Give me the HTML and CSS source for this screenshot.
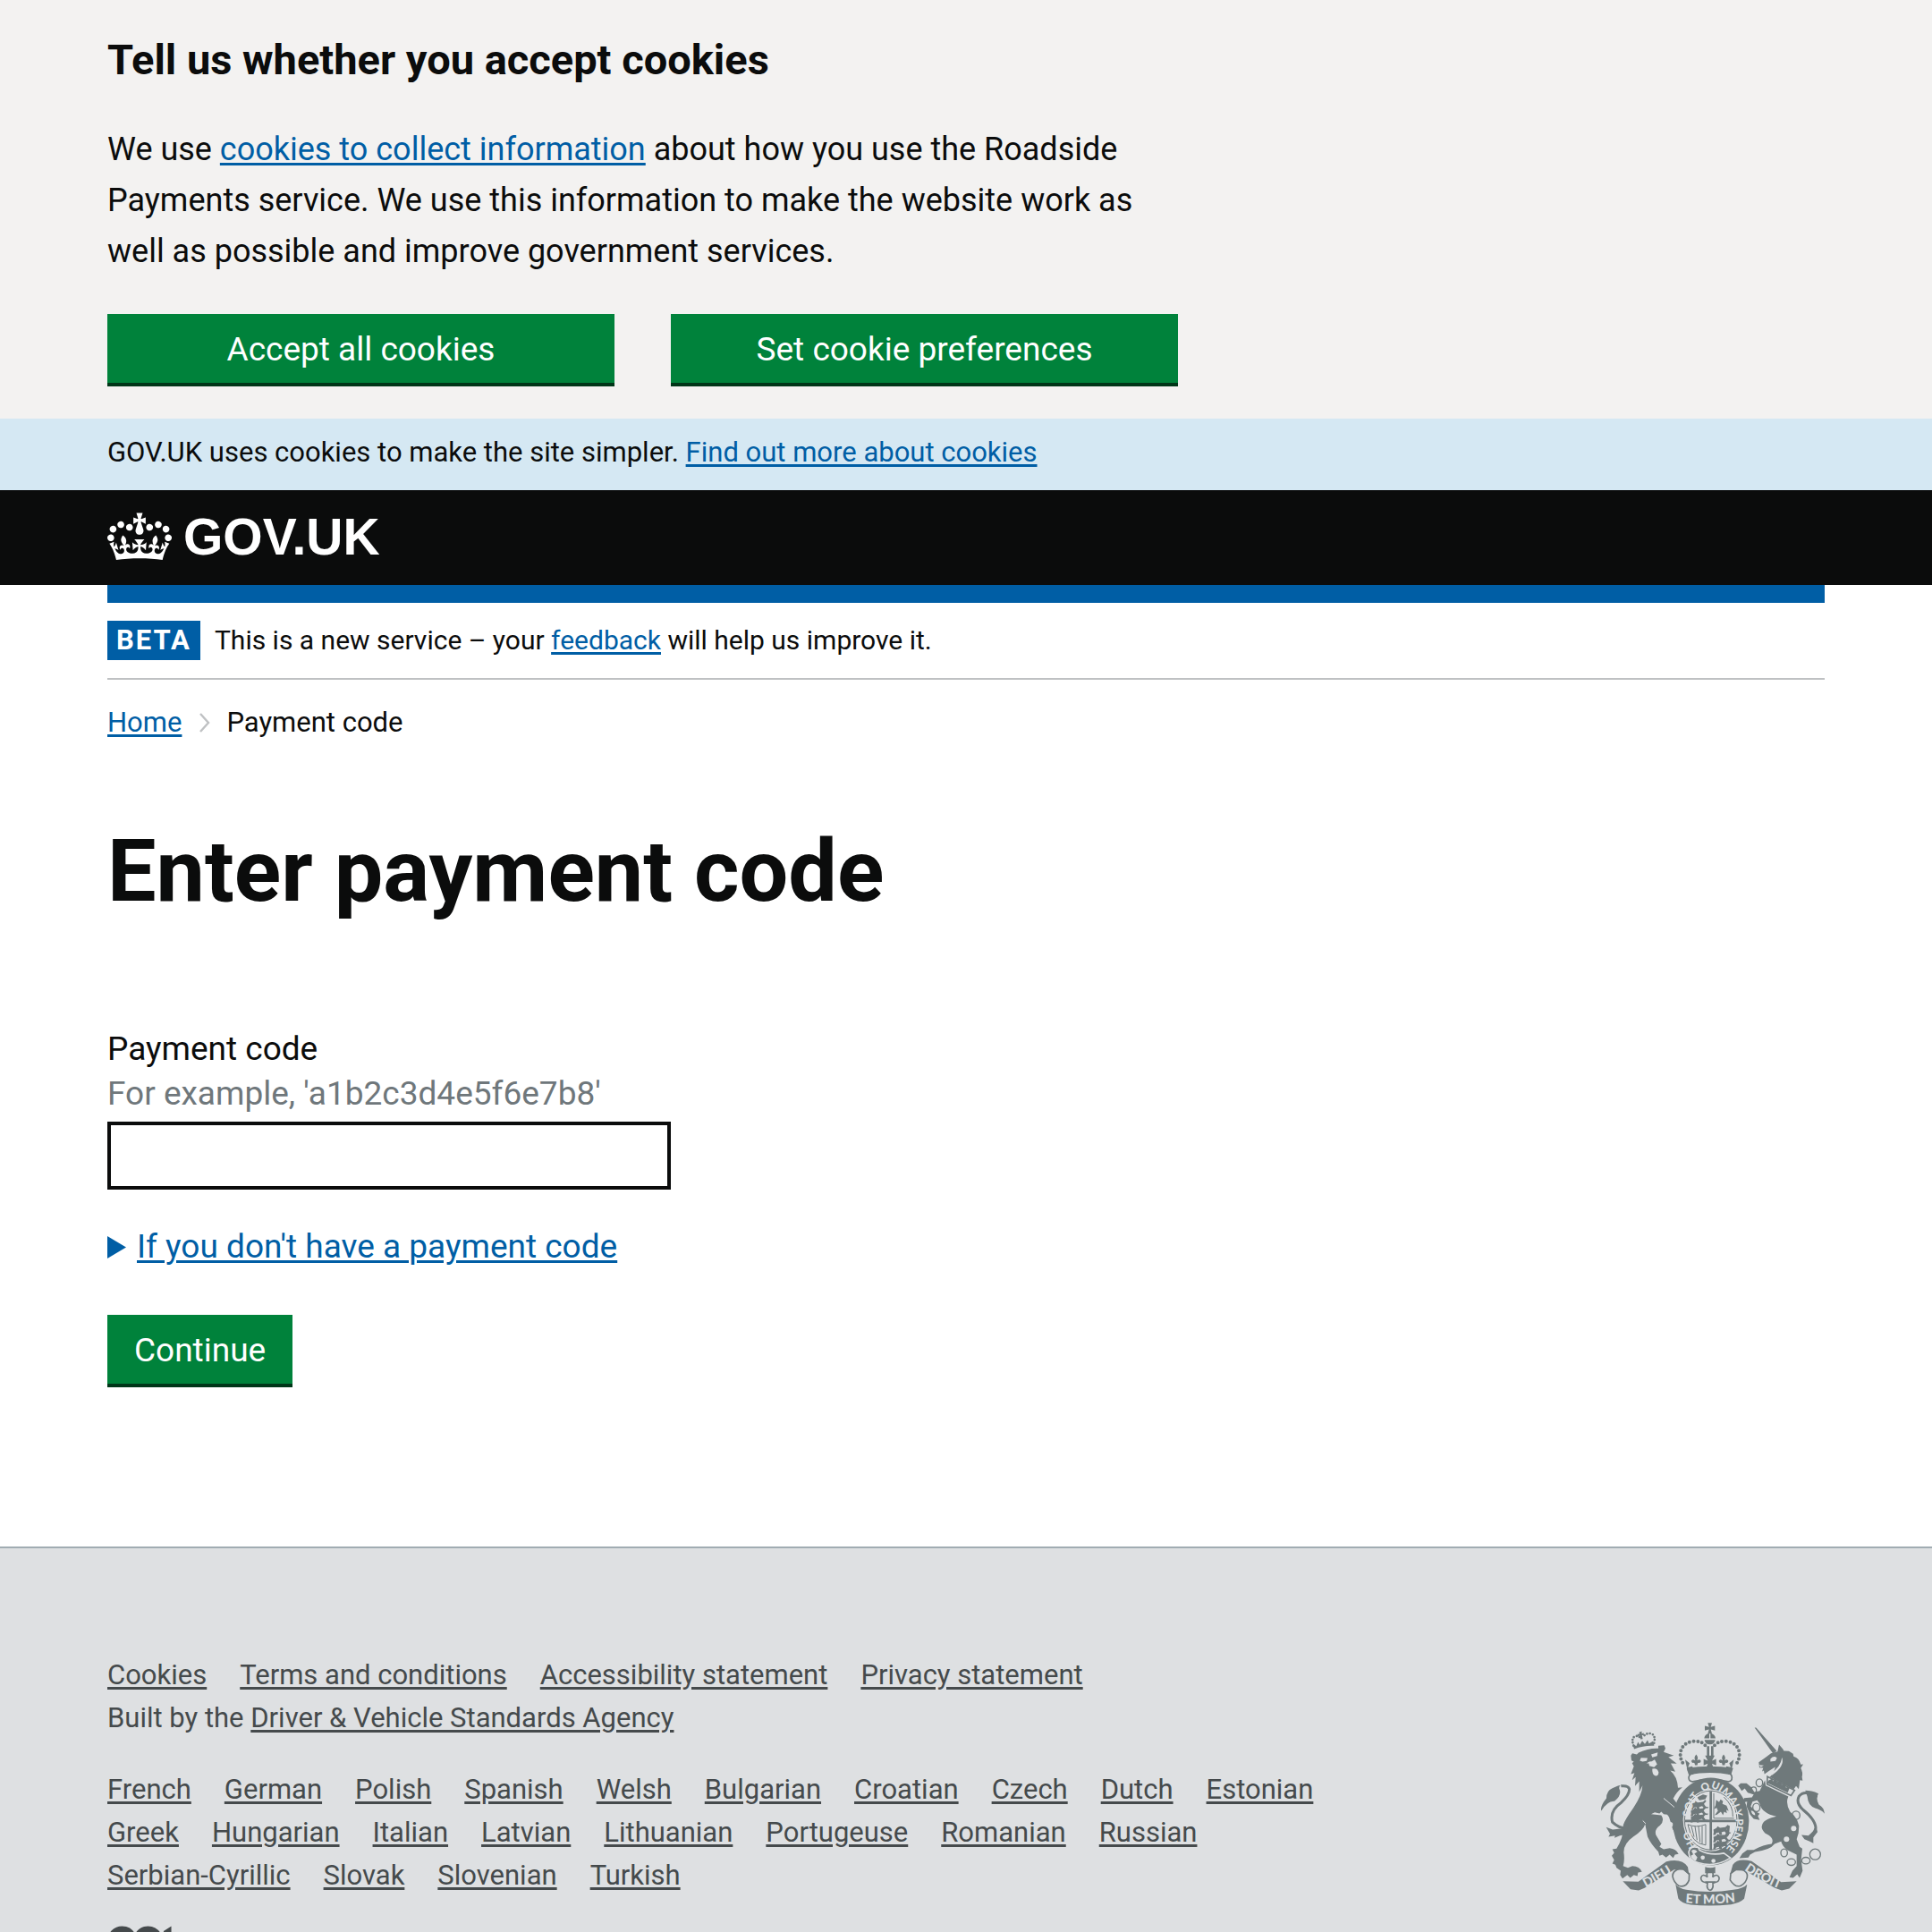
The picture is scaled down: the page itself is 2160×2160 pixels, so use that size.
FILE: index.html
```html
<!DOCTYPE html>
<html lang="en">
<head>
  <meta charset="utf-8">
  <meta name="viewport" content="width=device-width, initial-scale=1">
  <title>Enter payment code - GOV.UK</title>
  <link rel="stylesheet" href="styles.css">
</head>
<body>
  <section class="cookie-banner" aria-label="Cookie choices">
    <div class="container">
      <div class="cookie-banner-content">
        <h2 class="cookie-banner-title">Tell us whether you accept cookies</h2>
        <p class="cookie-banner-text">We use <a class="link" href="#">cookies to collect information</a> about how you use the Roadside Payments service. We use this information to make the website work as well as possible and improve government services.</p>
        <div class="cookie-banner-actions">
          <button class="button" type="button">Accept all cookies</button>
          <button class="button" type="button">Set cookie preferences</button>
        </div>
      </div>
    </div>
  </section>

  <div class="cookie-message">
    <p class="container">GOV.UK uses cookies to make the site simpler. <a class="link" href="#">Find out more about cookies</a></p>
  </div>

  <header class="header">
    <div class="container">
      <a class="logo" href="#">
        <svg class="logo-crown" aria-hidden="true" viewBox="0 0 132 97"><path fill="currentColor" fill-rule="evenodd" d="M25 30.2c3.5 1.5 7.7-.2 9.1-3.7 1.5-3.6-.2-7.8-3.9-9.2-3.6-1.4-7.6.3-9.1 3.9-1.4 3.5.3 7.5 3.9 9zM9 39.5c3.6 1.5 7.8-.2 9.2-3.7 1.5-3.6-.2-7.8-3.9-9.1-3.6-1.5-7.6.2-9.1 3.8-1.4 3.5.3 7.5 3.8 9zM4.4 57.2c3.5 1.5 7.7-.2 9.1-3.8 1.5-3.6-.2-7.7-3.9-9.1-3.5-1.5-7.6.3-9.1 3.8-1.4 3.5.3 7.6 3.9 9.1zm38.3-21.4c3.5 1.5 7.7-.2 9.1-3.8 1.5-3.6-.2-7.7-3.9-9.1-3.6-1.5-7.6.3-9.1 3.8-1.3 3.6.4 7.7 3.9 9.1zm64.4-5.6c-3.6 1.5-7.8-.2-9.1-3.7-1.5-3.6.2-7.8 3.8-9.2 3.6-1.4 7.7.3 9.2 3.9 1.3 3.5-.4 7.5-3.9 9zm15.9 9.3c-3.6 1.5-7.7-.2-9.1-3.7-1.5-3.6.2-7.8 3.7-9.1 3.6-1.5 7.7.2 9.2 3.8 1.5 3.5-.3 7.5-3.8 9zm4.7 17.7c-3.6 1.5-7.8-.2-9.2-3.8-1.5-3.6.2-7.7 3.9-9.1 3.6-1.5 7.7.3 9.2 3.8 1.3 3.5-.4 7.6-3.9 9.1zM89.3 35.8c-3.6 1.5-7.8-.2-9.2-3.8-1.4-3.6.2-7.7 3.9-9.1 3.6-1.5 7.7.3 9.2 3.8 1.4 3.6-.3 7.7-3.9 9.1zM69.7 17.7l8.9 4.7V9.3l-8.9 2.8c-.2-.3-.5-.6-.9-.9L72.4 0H59.6l3.5 11.2c-.3.3-.6.5-.9.9l-8.8-2.8v13.1l8.8-4.7c.3.3.6.7.9.9l-5 15.4v.1c-.2.8-.4 1.6-.4 2.4 0 4.1 3.1 7.5 7 8.1h.2c.3 0 .7.1 1 .1.4 0 .7 0 1-.1h.2c4-.6 7.1-4.1 7.1-8.1 0-.8-.1-1.7-.4-2.4V34l-5.1-15.4c.4-.2.7-.6 1-.9zM66 92.8c16.9 0 32.8 1.1 47.1 3.2 4-16.9 8.9-26.7 14-33.5l-9.6-3.4c1 4.9 1.1 7.2 0 10.2-1.5-1.4-3-4.3-4.2-8.7L108.6 76c2.8-2 5-3.2 7.5-3.3-4.4 9.4-10 11.9-13.6 11.2-4.3-.8-6.3-4.6-5.6-7.9 1-4.7 5.7-5.9 8-.5 4.3-8.7-3-11.4-7.6-8.8 7.1-7.2 7.9-13.5 2.1-21.1-8 6.1-8.1 12.3-4.5 20.8-4.7-5.4-12.1-2.5-9.5 6.2 3.4-5.2 7.9-2 7.2 3.1-.6 4.3-6.4 7.8-13.5 7.2-10.3-.9-10.9-8-11.2-13.8 2.5-.5 7.1 1.8 11 7.3L80.2 60c-4.1 4.4-8 5.3-12.3 5.4 1.4-4.4 8-11.6 8-11.6H55.5s6.4 7.2 7.9 11.6c-4.2-.1-8-1-12.3-5.4l1.4 16.4c3.9-5.5 8.5-7.7 10.9-7.3-.3 5.8-.9 12.8-11.1 13.8-7.2.6-12.9-2.9-13.5-7.2-.7-5 3.8-8.3 7.1-3.1 2.7-8.7-4.6-11.6-9.4-6.2 3.7-8.5 3.6-14.7-4.6-20.8-5.8 7.6-5 13.9 2.2 21.1-4.7-2.6-11.9.1-7.7 8.8 2.3-5.5 7.1-4.2 8.1.5.7 3.3-1.3 7.1-5.7 7.9-3.5.7-9-1.8-13.5-11.2 2.5.1 4.7 1.3 7.5 3.3l-4.7-15.4c-1.2 4.4-2.7 7.2-4.3 8.7-1.1-3-.9-5.3 0-10.2l-9.5 3.4c5 6.9 9.9 16.7 14 33.5 14.8-2.1 30.8-3.2 47.7-3.2z"/></svg>
        <span>GOV.UK</span>
      </a>
    </div>
  </header>

  <div class="container">
    <div class="header-bar"></div>
    <div class="phase-banner">
      <strong class="phase-tag">BETA</strong>
      <span>This is a new service – your <a class="link" href="#">feedback</a> will help us improve it.</span>
    </div>
    <nav aria-label="Breadcrumb">
      <ol class="breadcrumbs">
        <li><a class="link" href="#">Home</a></li>
        <li class="breadcrumb-current"><svg class="chevron" aria-hidden="true" viewBox="0 0 12 22"><path d="M1 1l9 10-9 10" fill="none" stroke="#bfc1c3" stroke-width="2.4"/></svg>Payment code</li>
      </ol>
    </nav>

    <main class="main">
      <h1 class="page-title">Enter payment code</h1>
      <form class="form">
        <label class="label" for="payment-code">Payment code</label>
        <span class="hint" id="payment-code-hint">For example, 'a1b2c3d4e5f6e7b8'</span>
        <input class="input" id="payment-code" name="payment-code" type="text" aria-describedby="payment-code-hint">
        <details class="details">
          <summary class="summary"><svg class="summary-arrow" aria-hidden="true" viewBox="0 0 21 25"><path d="M0 0l21 12.500L0 25z" fill="currentColor"/></svg><span class="link">If you don't have a payment code</span></summary>
        </details>
        <button class="button" type="submit">Continue</button>
      </form>
    </main>
  </div>

  <footer class="footer">
    <div class="container footer-row">
      <div class="footer-meta">
        <ul class="footer-list">
          <li><a href="#">Cookies</a></li>
          <li><a href="#">Terms and conditions</a></li>
          <li><a href="#">Accessibility statement</a></li>
          <li><a href="#">Privacy statement</a></li>
        </ul>
        <p class="built-by">Built by the <a href="#">Driver &amp; Vehicle Standards Agency</a></p>
        <ul class="footer-list footer-languages">
          <li><a href="#">French</a></li>
          <li><a href="#">German</a></li>
          <li><a href="#">Polish</a></li>
          <li><a href="#">Spanish</a></li>
          <li><a href="#">Welsh</a></li>
          <li><a href="#">Bulgarian</a></li>
          <li><a href="#">Croatian</a></li>
          <li><a href="#">Czech</a></li>
          <li><a href="#">Dutch</a></li>
          <li><a href="#">Estonian</a></li>
          <li><a href="#">Greek</a></li>
          <li><a href="#">Hungarian</a></li>
          <li><a href="#">Italian</a></li>
          <li><a href="#">Latvian</a></li>
          <li><a href="#">Lithuanian</a></li>
          <li><a href="#">Portugeuse</a></li>
          <li><a href="#">Romanian</a></li>
          <li><a href="#">Russian</a></li>
          <li><a href="#">Serbian-Cyrillic</a></li>
          <li><a href="#">Slovak</a></li>
          <li><a href="#">Slovenian</a></li>
          <li><a href="#">Turkish</a></li>
        </ul>
        <svg class="licence-logo" aria-hidden="true" viewBox="0 0 483.200 195.700"><path fill="currentColor" d="M421.500 142.800V.1l-50.700 32.300v161.100h112.400v-50.700zm-122.300-9.600A47.120 47.120 0 0 1 221 97.800c0-26 21.100-47.100 47.100-47.100 16.700 0 31.400 8.700 39.700 21.800l42.700-27.200A97.630 97.630 0 0 0 268.100 0c-36.500 0-68.300 20.100-85.100 49.700A98 98 0 0 0 97.800 0C43.900 0 0 43.900 0 97.800s43.900 97.800 97.800 97.800c36.500 0 68.300-20.100 85.100-49.700a97.760 97.760 0 0 0 149.600 25.400l19.400 22.200h3v-87.800h-80l24.300 27.500zM97.800 145c-26 0-47.100-21.100-47.100-47.100s21.100-47.100 47.100-47.100 47.100 21.100 47.100 47.100S123.800 145 97.800 145"/></svg>
      </div>
      <a class="arms-link" href="#" aria-label="Crown copyright">
        <svg class="arms" viewBox="60 80 750 614" aria-hidden="true">
          <defs>
            <path id="garter" d="M428 533A105 124 0 0 1 428 298A105 120 0 0 1 428 533"/>
            <path id="dieu" d="M202 637Q255 610 306 576"/>
            <path id="mon" d="M338 683Q426 692 516 680"/>
            <path id="droit" d="M537 571Q590 610 662 638"/>
            <g id="lion-passant"><path d="M0 8l10-5 4-6 8 5 18-2 7-7 4 5-8 9 6 9 10 2-4 4-12-2-6-6-10 3 2 8-8 2-3-9-8 1-4 7-7 0 2-9z"/></g>
            <g id="fleur"><path d="M0-24q9 10 3 20 10-7 13 2 0 8-8 6-4 0-4 8h-8q0-8-4-8-8 2-8-6 3-9 13-2-6-10 3-20z"/></g>
            <g id="cross"><path d="M-7-18H7L3-4 17-8V8L3 4 7 18H-7l4-14-14 4V-8l14 4z"/></g>
          </defs>

          <!-- Central crown -->
          <use href="#cross" x="425" y="98"/>
          <path d="M406 132q2-14 17-17v17zM427 115q15 3 17 17h-17zM407 137h36q-2 15-18 15t-18-15z"/>
          <path d="M415 158h8v32h-8zM429 158h8v32h-8zM409 190h32l-9 17 14-6v22l-14-6 6 17h-26l6-17-14 6v-22l14 6z"/>
          <g class="arms-beads">
            <path d="M409 155Q395 139 368 142Q330 149 326 182Q325 206 340 222"/>
            <path d="M441 155Q455 139 482 142Q520 149 524 182Q525 206 510 222"/>
          </g>
          <use href="#fleur" x="379" y="210"/><use href="#fleur" x="471" y="210"/>
          <path d="M342 203l15 12-5 14 14-3 4 8q52-12 106 0l5-8 14 3-5-14 15-12q-4 22-9 40-68-20-145 0-5-20-9-40z"/>
          <path d="M347 232q78-13 156 0l-7 22q-70-13-142 0z"/>
          <path class="arms-line" d="M370 250q-15 1-16 14 1 14 14 13 58-14 118 0 13 0 13-13 0-13-12-14"/>

          <!-- Garter and quartered shield -->
          <ellipse cx="428" cy="411" rx="128" ry="147"/>
          <ellipse class="arms-light" cx="428" cy="407" rx="93" ry="104"/>
          <ellipse class="arms-thin" cx="428" cy="407" rx="88" ry="99"/>
          <path d="M424 310h8v197h-8zM341 405h174v8H341z"/>
          <path class="arms-thin" d="M438 316v84h68M502 395q2-37-30-66"/>
          <g><use href="#lion-passant" x="362" y="345"/><use href="#lion-passant" x="361" y="367"/><use href="#lion-passant" x="361" y="388"/>
          <use href="#lion-passant" x="437" y="430"/><use href="#lion-passant" x="437" y="455"/><use href="#lion-passant" x="437" y="478"/></g>
          <path d="M382 330l20-10 14 4-6 12-20 4zM484 422l8 4-3 30-7 8-5-7z"/>
          <path d="M446 338l10 8 5-9 8 6-2 9 14 6 7 18-8-5 2 12-9-5-4 12-7-12-13 10-8 2 11-15-4-10-10 4 6-13z"/>
          <path class="arms-thin" d="M351 421q28 12 60 0v69q-48-4-60-69zM363 427l9 35M375 427l7 46M387 427l5 53M399 426v60"/>
          <g class="arms-motto">
            <text><textPath href="#garter" startOffset="15%">HO</textPath></text>
            <text><textPath href="#garter" startOffset="34%">SOIT</textPath></text>
            <text><textPath href="#garter" startOffset="49%">QUI</textPath></text>
            <text><textPath href="#garter" startOffset="61%">MAL</textPath></text>
            <text><textPath href="#garter" startOffset="69%">Y</textPath></text>
            <text><textPath href="#garter" startOffset="81%">PENSE</textPath></text>
          </g>
          <path class="arms-outline" d="M354 514q5-24 32-16l4 9q38 20 82 10l22 16q-52 34-108 16-30-4-32-35z"/>
          <circle class="arms-light" cx="401" cy="532" r="7"/><circle class="arms-light" cx="437" cy="543" r="7"/>
          <path class="arms-light" d="M363 509q10-8 20 3l-10 7 10 12-5 12q-14-3-17-17l8-5z"/>
          <path d="M409 563q18 6 34 0v21h-34z"/>

          <!-- Lion -->
          <g class="arms-small-beads">
            <path d="M169 157Q160 130 175 125Q184 122 192 130"/>
            <path d="M238 148Q244 122 228 116Q212 113 202 126"/>
          </g>
          <path d="M188 111l9-2-1 7 7-2 1 8-7-1 3 13-8 1-2-13-7 4-1-8 7-1z"/>
          <path d="M171 168l-5-19 12 9 6-14 6 10 8-14 9 11 9-13 5 11 14-8 3 16q-33-2-67 11z"/>
          <path d="M160 190L165 182 180 186 186 180Q220 164 252 166L252 157 272 155 276 166 270 178 304 190 286 195 314 217 294 216 309 244 292 240Q316 260 318 298L333 296Q312 312 302 334 326 360 332 405L336 425 326 424 318 438 312 424 302 440 298 430 304 418 293 412 288 396 282 388 270 386 262 378 256 384 240 380 228 386 262 390Q274 408 258 424 238 438 244 456L262 486 256 496 270 504 290 500Q312 502 320 520L308 522 302 533 290 522 278 532 266 522 256 526 252 512Q228 488 216 462L208 420Q202 440 168 462 136 484 136 514 140 540 134 560L150 566 165 560Q190 560 197 580L184 582 182 594 170 590 158 600 148 590 132 602 124 590 126 576 112 566 108 556 98 552 104 540 96 526 104 516 98 504 112 502Q138 460 134 424 140 404 168 366 198 320 199 290L188 312 188 276 174 292 176 262 164 272 172 248 160 252 170 226 164 215 170 210 162 206z"/>
          <path class="arms-light" d="M190 207l4-10 22 1-3 10-14 2zM228 186l22-7-2 12-16 5zM212 216l10-6 8-1 10-6 8 16-10 10-16-5-2-8z"/>
          <path class="arms-light" d="M232 234q17-4 21 12 0 12-10 12-13-4-11-24z"/>
          <path class="arms-gap" d="M270 333l36 30M210 418l-10-10"/>
          <path class="arms-tail" d="M150 433q-28 3-52-20-10-39 30-66 28-26 27-45-4-13-28-10"/>
          <path d="M134 287q-15 1-13 14 10 22-16 42-23-2-44 32-4-10 8-30l9-12q0-26 20-34 20-10 36-12z"/>
          <path d="M77 430l22 8 32-4 22-18-8 38-22 4-18 8 2-8-22 4 5-10z"/>

          <!-- Unicorn -->
          <path d="M575 96l5 0 69 78-12 9z"/>
          <path d="M589 212L612 196 630 182 652 176 657 153 670 168 673 174 690 175 704 184 706 193Q724 198 730 220L738 219 730 232Q738 248 734 262L736 274 727 272 723 302 714 292 706 303 626 262Q642 246 644 228L624 241 608 252 606 240 600 243 604 231 591 230z"/>
          <path class="arms-light" d="M628 201q12-13 22-3l-5 10-17 2zM589 221l17 2-10 6zM627 250q35-18 40-54 10 30-34 60z"/>
          <path class="arms-line" d="M618 260l91 46-12 18-80-38z"/>
          <path d="M623 272l12-5 1 10 10-12 5 16 11-9 4 17 11-9 3 17 14-3-8 20-69-33z"/>
          <path d="M610 272L612 290 688 327Q678 350 694 378 718 396 724 426L722 450 716 470 726 496 735 502 731 540 736 576 726 600 718 588 704 600 692 598 702 576 716 560 716 522 684 506Q668 494 664 478L642 486Q628 506 576 513L560 522 554 532 524 534 534 518 550 506 572 506Q606 488 632 486 644 466 610 450 590 430 606 412 618 400 648 394 600 384 592 352L584 340 568 344 562 360 580 378 592 385 586 392 592 406 572 402 560 388 548 360 550 344 532 348 540 332 566 330 572 320 552 314 542 300 532 308 524 296 520 291 528 283 548 283 564 296 574 312 592 308z"/>
          <path class="arms-light" d="M563 374q14 2 14 16-12-2-14-16z"/>
          <circle class="arms-light" cx="706" cy="434" r="9"/><circle class="arms-light" cx="682" cy="470" r="9"/>
          <g class="arms-chain"><ellipse cx="591" cy="281" rx="11" ry="13"/><ellipse cx="572" cy="306" rx="9" ry="11"/><ellipse cx="581" cy="364" rx="12" ry="14"/><ellipse cx="714" cy="390" rx="13" ry="14"/><ellipse cx="674" cy="516" rx="11" ry="13"/><ellipse cx="698" cy="547" rx="14" ry="11"/><ellipse cx="747" cy="542" rx="14" ry="11"/><circle cx="778" cy="521" r="18"/></g>
          <path class="arms-tail" d="M784 330q-40-28-60-4-12 22 14 46 40 32 42 60-4 20-20 28"/>
          <path d="M745 307q20 0 44 10-10 18 2 38 16 8 19 30-12-14-32-19-24-8-26-38zM783 432l3 14-6 8-8 10 0 20-12-6-18-8-10-14 24 2z"/>

          <!-- Ribbon and motto -->
          <path d="M133 611l52 2 94-68q52-12 72 18l4 27-19-16-31-2-99 62-20 8-27-4z"/>
          <path d="M716 611l-52 3-99-70q-47-12-63 12l-9 32 20-13 31 1 99 58 23 8 25-6z"/>
          <path class="arms-line" d="M325 568q-26 8-25 27 4 20 20 31 24 9 35-18l1-22-22-17M527 570q28 8 23 29-5 20-21 27-19 8-36-19l2-22 20-16"/>
          <path d="M310 622q12 14 36 18 78 13 157 0 35-4 47-18l-10 48q-14 14-44 19-70 8-135 1-32-5-42-21z"/>
          <path class="arms-line" d="M426 572q14 11 8 25 16-13 22 2 2 14-13 16l-8 3q3 20-9 24-14-4-9-24l-8-3q-15-2-14-16 5-15 22-2-7-14 9-25zM409 614h35"/>
          <g class="arms-motto arms-ribbon">
            <text><textPath href="#dieu" startOffset="50%">DIEU</textPath></text>
            <text><textPath href="#mon" startOffset="50%">ET MON</textPath></text>
            <text><textPath href="#droit" startOffset="50%">DROIT</textPath></text>
          </g>
        </svg>
      </a>
    </div>
  </footer>
</body>
</html>
```
FILE: styles.css
```css
* {
  box-sizing: border-box;
}

body {
  margin: 0;
  background: #fff;
  color: #0b0c0c;
  font-family: Roboto, "Liberation Sans", sans-serif;
  font-size: 37px;
  line-height: 50px;
}

h1, h2, p, ul, ol {
  margin: 0;
  padding: 0;
}

ul, ol {
  list-style: none;
}

.container {
  max-width: 1920px;
  margin: 0 auto;
}

.link {
  color: #005ea5;
}

.link, .footer a {
  text-decoration: underline;
  text-decoration-thickness: 3px;
  text-underline-offset: 3px;
}

.button {
  min-height: 77px;
  padding: 15px 30px 12px;
  border: 0;
  background: #00823b;
  box-shadow: 0 4px 0 #003618;
  color: #fff;
  font: inherit;
  text-align: center;
}

/* Cookie banner */

.cookie-banner {
  padding: 36px 0 40px;
  background: #f3f2f1;
}

.cookie-banner-content {
  max-width: 1197px;
}

.cookie-banner-title {
  margin-bottom: 41px;
  font-size: 47px;
  line-height: 62px;
}

.cookie-banner-text {
  margin-bottom: 41px;
  font-size: 36px;
  line-height: 57px;
}

.cookie-banner-actions {
  display: grid;
  grid-template-columns: 1fr 1fr;
  gap: 63px;
}

.cookie-message {
  padding: 18px 0 22px;
  background: #d5e8f3;
  font-size: 31px;
  line-height: 40px;
}

/* Header */

.header {
  padding: 20px 0 22px;
  background: #0b0c0c;
}

.logo {
  display: flex;
  align-items: center;
  gap: 13px;
  width: fit-content;
  color: #fff;
  font-family: "Liberation Sans", Arial, sans-serif;
  font-size: 57px;
  font-weight: 700;
  line-height: 64px;
  text-decoration: none;
}

.logo-crown {
  width: 72px;
  height: 60px;
}

.header-bar {
  height: 20px;
  background: #005ea5;
}

.phase-banner {
  display: flex;
  align-items: center;
  gap: 16px;
  padding: 20px 0;
  border-bottom: 2px solid #bfc1c3;
  font-size: 30px;
  line-height: 44px;
}

.phase-tag {
  padding: 0 10px;
  background: #005ea5;
  color: #fff;
  font-size: 31px;
  letter-spacing: 2px;
}

.breadcrumbs {
  display: flex;
  gap: 20px;
  padding-top: 28px;
  font-size: 31px;
  line-height: 40px;
}

.breadcrumb-current {
  display: flex;
  align-items: center;
  gap: 18px;
}

.chevron {
  width: 12px;
  height: 22px;
}

/* Main content */

.main {
  padding: 96px 0 182px;
}

.page-title {
  margin-bottom: 124px;
  font-size: 97px;
  line-height: 100px;
}

.form {
  display: flex;
  flex-direction: column;
  align-items: flex-start;
}

.hint {
  color: #6f777b;
}

.input {
  width: 630px;
  max-width: 100%;
  height: 76px;
  margin-top: 6px;
  padding: 8px;
  border: 4px solid #0b0c0c;
  border-radius: 0;
  background: #fff;
  font: inherit;
}

.details {
  margin: 39px 0 51px;
}

.summary {
  display: flex;
  align-items: center;
  gap: 12px;
  color: #005ea5;
  cursor: pointer;
}

.summary-arrow {
  width: 21px;
  height: 25px;
}

/* Footer */

.footer {
  padding: 118px 0 0;
  border-top: 2px solid #a1acb2;
  background: #dee0e2;
  color: #454a4c;
  font-size: 31px;
  line-height: 48px;
}

.footer a {
  color: inherit;
}

.footer-row {
  display: flex;
  justify-content: space-between;
  align-items: flex-end;
}

.footer-meta {
  flex: 0 1 1420px;
}

.footer-list {
  display: flex;
  flex-wrap: wrap;
  column-gap: 37px;
}

.footer-languages {
  margin-top: 32px;
}

.licence-logo {
  display: block;
  width: 82px;
  height: 34px;
  margin-top: 32px;
}

.arms-link {
  flex: none;
  padding-bottom: 56px;
}

.arms {
  display: block;
  width: 250px;
  height: 205px;
  fill: #6f797b;
}

.arms-light {
  fill: #dee0e2;
}

.arms-line, .arms-thin, .arms-tail, .arms-chain, .arms-beads, .arms-small-beads, .arms-gap {
  fill: none;
  stroke: #6f797b;
  stroke-width: 5;
}

.arms-thin {
  stroke-width: 3;
}

.arms-tail {
  stroke-width: 9;
}

.arms-chain {
  stroke-width: 4;
}

.arms-beads {
  stroke-width: 12;
  stroke-linecap: round;
  stroke-dasharray: 0 14;
}

.arms-small-beads {
  stroke-width: 8;
  stroke-linecap: round;
  stroke-dasharray: 0 10;
}

.arms-gap {
  stroke: #dee0e2;
  stroke-width: 3;
}

.arms-outline {
  stroke: #dee0e2;
  stroke-width: 5;
}

.arms-motto {
  fill: #dee0e2;
  font-family: Lato, "Liberation Sans", sans-serif;
  font-size: 35px;
  font-weight: 900;
  text-anchor: middle;
}

.arms-ribbon {
  font-size: 43px;
}
```
